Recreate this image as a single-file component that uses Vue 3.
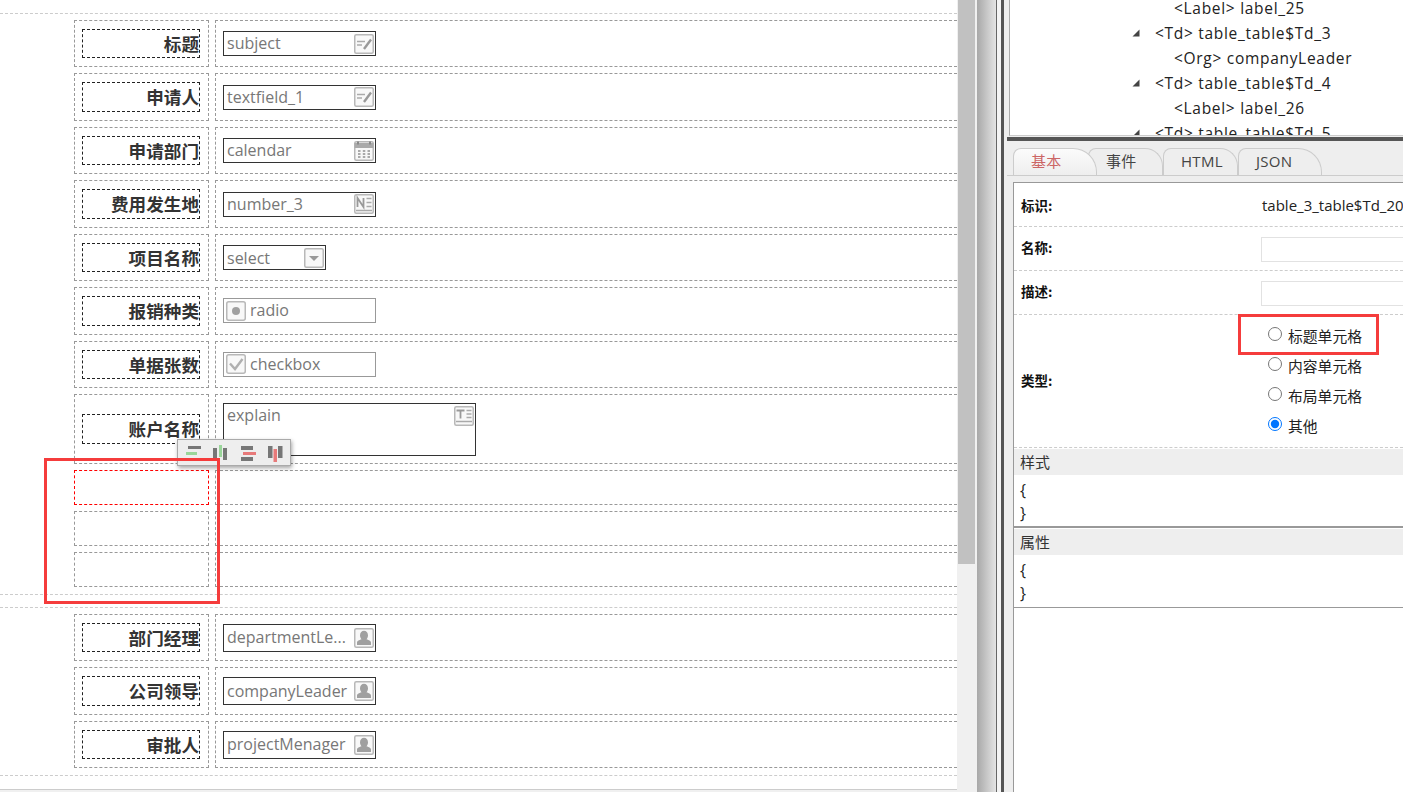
<script setup>
const groupOne = [
  { label: '标题', value: 'subject', icon: 'text', kind: 'input' },
  { label: '申请人', value: 'textfield_1', icon: 'text', kind: 'input' },
  { label: '申请部门', value: 'calendar', icon: 'calendar', kind: 'input' },
  { label: '费用发生地', value: 'number_3', icon: 'number', kind: 'input' },
  { label: '项目名称', value: 'select', icon: 'select', kind: 'select' },
  { label: '报销种类', value: 'radio', icon: 'radio', kind: 'choice' },
  { label: '单据张数', value: 'checkbox', icon: 'check', kind: 'choice' },
  { label: '账户名称', value: 'explain', icon: 'area', kind: 'area' },
]
const groupTwo = [
  { label: '部门经理', value: 'departmentLe...', icon: 'person', kind: 'org' },
  { label: '公司领导', value: 'companyLeader', icon: 'person', kind: 'org' },
  { label: '审批人', value: 'projectMenager', icon: 'person', kind: 'org' },
]
const emptyRows = [{ active: true }, { active: false }, { active: false }]
const tree = [
  { text: '<Label> label_25', open: false },
  { text: '<Td> table_table$Td_3', open: true },
  { text: '<Org> companyLeader', open: false },
  { text: '<Td> table_table$Td_4', open: true },
  { text: '<Label> label_26', open: false },
  { text: '<Td> table_table$Td_5', open: true },
]
const tabs = ['基本', '事件', 'HTML', 'JSON']
const cellTypes = ['标题单元格', '内容单元格', '布局单元格', '其他']
</script>

<template>
  <div class="page">
    <main class="form-pane">
      <section class="group">
        <div v-for="row in groupOne" :key="row.label" class="row" :class="{ tall: row.kind === 'area' }">
          <div class="cell label-cell"><div class="label-box">{{ row.label }}</div></div>
          <div class="cell value-cell">
            <div class="field" :class="row.kind">
              <svg v-if="row.kind === 'choice'" class="ficon lead" viewBox="0 0 20 20">
                <rect x=".75" y=".75" width="18.5" height="18.5" rx="2" fill="#f8f8f8" stroke="#b8b8b8" stroke-width="1.500" />
                <circle v-if="row.icon === 'radio'" cx="10" cy="10" r="4" fill="#a0a0a0" />
                <path v-else d="M4 9.500 9 15 16.500 5" fill="none" stroke="#b0b0b0" stroke-width="2.400" />
              </svg>
              <span class="field-text">{{ row.value }}</span>
              <svg v-if="row.kind !== 'choice'" class="ficon" viewBox="0 0 20 20">
                <rect x=".75" y=".75" width="18.5" height="18.5" rx="1.500" fill="#f8f8f8" stroke="#b8b8b8" stroke-width="1.500" />
                <template v-if="row.icon === 'text'">
                  <path d="M3 7.500h8M3 11h5" stroke="#aaa" stroke-width="1.600" fill="none" />
                  <path d="M17 5.500 10 15" stroke="#999" stroke-width="2.400" fill="none" />
                </template>
                <template v-else-if="row.icon === 'calendar'">
                  <rect x=".5" y="2" width="19" height="5" fill="#aaa" />
                  <path d="M4 .5v3M16 .5v3" stroke="#888" stroke-width="2" />
                  <path d="M4 10h2.500M8.800 10h2.500M13.500 10h2.500M4 13h2.500M8.800 13h2.500M13.500 13h2.500M4 16h2.500M8.800 16h2.500M13.500 16h2.500" stroke="#aaa" stroke-width="2" />
                </template>
                <template v-else-if="row.icon === 'number'">
                  <path d="M3.500 13V4l6 9V4" stroke="#999" stroke-width="1.800" fill="none" />
                  <path d="M12.500 4.500h5M12.500 8.500h5M12.500 12.500h5M2 16.500h16" stroke="#aaa" stroke-width="1.300" fill="none" />
                </template>
                <path v-else-if="row.icon === 'select'" d="M5 8h10l-5 5z" fill="#999" />
                <template v-else-if="row.icon === 'area'">
                  <path d="M2.500 4.500h8M6.500 4.500v8" stroke="#999" stroke-width="1.800" fill="none" />
                  <path d="M12.500 4.500h5M12.500 8h5M12.500 11.500h5M2 15.500h16" stroke="#aaa" stroke-width="1.300" fill="none" />
                </template>
              </svg>
            </div>
          </div>
        </div>
        <div v-for="(row, i) in emptyRows" :key="i" class="row short">
          <div class="cell label-cell" :class="{ active: row.active }"></div>
          <div class="cell value-cell"></div>
        </div>
      </section>
      <section class="group second">
        <div v-for="row in groupTwo" :key="row.label" class="row">
          <div class="cell label-cell"><div class="label-box">{{ row.label }}</div></div>
          <div class="cell value-cell">
            <div class="field org">
              <span class="field-text">{{ row.value }}</span>
              <svg class="ficon" viewBox="0 0 20 20">
                <rect x=".75" y=".75" width="18.5" height="18.5" rx="1.500" fill="#f8f8f8" stroke="#b8b8b8" stroke-width="1.500" />
                <ellipse cx="10" cy="7.500" rx="4" ry="4.800" fill="#a0a0a0" />
                <path d="M3 17v-2.500c0-2 3.500-2.800 5-3.500h4c1.500.7 5 1.500 5 3.500V17z" fill="#a0a0a0" />
              </svg>
            </div>
          </div>
        </div>
      </section>
      <div class="pane-foot"></div>
    </main>

    <div class="scrollbar"><div class="thumb"></div></div>
    <div class="splitter"></div>

    <aside class="side">
      <div class="tree">
        <div v-for="item in tree" :key="item.text" class="tree-item" :class="{ parent: item.open }">
          <svg v-if="item.open" class="arrow" viewBox="0 0 8 8"><path d="M7.500 .5V7.500H.5z" fill="#444" /></svg>
          <span>{{ item.text }}</span>
        </div>
      </div>
      <div class="hbar"></div>
      <nav class="tabs">
        <div v-for="(tab, i) in tabs" :key="tab" class="tab" :class="['tab-' + i, { current: i === 0 }]">{{ tab }}</div>
      </nav>
      <div class="props">
        <div class="prop"><b>标识:</b><div class="prop-value plain">table_3_table$Td_20</div></div>
        <div class="prop lifted"><b>名称:</b><div class="prop-value"><div class="fake-input"></div></div></div>
        <div class="prop lifted"><b>描述:</b><div class="prop-value"><div class="fake-input"></div></div></div>
        <div class="prop type">
          <b>类型:</b>
          <div class="radios">
            <label v-for="(t, i) in cellTypes" :key="t" class="radio-row">
              <input type="radio" name="cell-type" :checked="i === 3" />
              <span>{{ t }}</span>
            </label>
          </div>
        </div>
        <div class="section-title">样式</div>
        <div class="code thick"><div>{</div><div>}</div></div>
        <div class="section-title">属性</div>
        <div class="code"><div>{</div><div>}</div></div>
      </div>
    </aside>

    <div class="align-bar">
      <svg viewBox="0 0 20 20"><path d="M4 3h13v3H4zM4 15h13v3H4z" fill="#777" /><path d="M2 9h11v3H2z" fill="#9ad69a" /></svg>
      <svg viewBox="0 0 20 20"><path d="M2 5h4v12H2zM12 5h4v12H12z" fill="#777" /><path d="M8 2h3v12H8z" fill="#9ad69a" /></svg>
      <svg viewBox="0 0 20 20"><path d="M3 3h12v4H3zM3 14h12v4H3z" fill="#777" /><path d="M5 9h13v3H5z" fill="#e87a7a" /></svg>
      <svg viewBox="0 0 20 20"><path d="M3 3h4.500v12H3zM13 3h4.500v12H13z" fill="#777" /><path d="M8.500 6h3.500v13H8.500z" fill="#e87a7a" /></svg>
    </div>
    <div class="mark mark-left"></div>
    <div class="mark mark-right"></div>
  </div>
</template>

<style>
html, body { margin: 0; background: #fff; overflow: hidden; }
</style>

<style scoped>
.page {
  position: relative;
  display: flex;
  width: 1403px;
  height: 792px;
  overflow: hidden;
  background: #fff;
  font-family: "Open Sans", "Noto Sans CJK SC", sans-serif;
  color: #333;
}
.form-pane {
  position: relative;
  flex: 0 0 957px;
  box-sizing: border-box;
  padding-top: 13px;
  overflow: hidden;
}
.group {
  display: flex;
  flex-direction: column;
  gap: 6px;
  padding: 6px 0 7px 74px;
  border-top: 1px dashed #ccc;
}
.group:first-child { border-bottom: 1px dashed #ccc; }
.group.second {
  margin-top: 12px;
  border-bottom: 1px dashed #ccc;
}
.row { display: flex; gap: 6px; height: 47.450px; }
.row.tall { height: 69.850px; }
.row.short { height: 35px; }
.cell {
  box-sizing: border-box;
  display: flex;
  align-items: center;
  padding-left: 7px;
  border: 1px dashed #999;
}
.label-cell { flex: 0 0 135px; }
.label-cell.active { border-color: #f00; }
.value-cell { flex: 1; border-right: 0; }
.label-box {
  box-sizing: border-box;
  width: 118px;
  height: 29.500px;
  border: 1px dashed #222;
  font: 700 17.600px/28px "Noto Sans CJK SC", sans-serif;
  text-align: right;
  white-space: nowrap;
  overflow: hidden;
  color: #333;
}
.field {
  box-sizing: border-box;
  display: flex;
  align-items: center;
  justify-content: space-between;
  width: 153px;
  height: 25px;
  padding: 0 1px 0 3px;
  border: 1px solid #333;
  font-size: 16px;
  color: #777;
}
.field.select { width: 103px; margin-top: 1px; }
.field.select .field-text { margin-top: 0; }
.field.choice {
  justify-content: flex-start;
  gap: 4px;
  padding-left: 2px;
  border-color: #999;
}
.field.area {
  width: 253px;
  height: 53px;
  margin-top: 1px;
  align-items: flex-start;
  padding-top: 2px;
}
.field.org { height: 28px; }
.field-text { white-space: nowrap; line-height: 20px; margin-top: -1px; }
.ficon { flex: none; width: 20px; height: 20px; }

.scrollbar {
  flex: 0 0 20px;
  background: #f0f0f0;
}
.thumb {
  height: 564px;
  margin: 0 2px 0 1px;
  background: #c1c1c1;
}
.splitter {
  flex: 0 0 27px;
  background: linear-gradient(to right,
    #a8a8a8 0, #e4e4e4 19px,
    #666 19px, #666 20px,
    #f4f4f4 20px, #f4f4f4 24px,
    #555 24px, #555 27px);
}
.side {
  flex: 1;
  min-width: 0;
  display: flex;
  flex-direction: column;
  padding-left: 3px;
  background: #eee;
}
.tree {
  box-sizing: border-box;
  height: 136px;
  margin-left: 2px;
  border-left: 1px solid #aaa;
  border-bottom: 1px solid #ccc;
  background: #fff;
  overflow: hidden;
}
.tree-item {
  position: relative;
  height: 25px;
  padding-left: 164px;
  font-size: 15.500px;
  letter-spacing: .7px;
  line-height: 17px;
  color: #222;
  white-space: nowrap;
}
.tree-item.parent { padding-left: 145px; }
.arrow {
  position: absolute;
  left: 122px;
  top: 4px;
  width: 8px;
  height: 8px;
}
.hbar { height: 4px; margin-top: 1px; background: #555; }
.tabs {
  box-sizing: border-box;
  display: flex;
  align-items: flex-end;
  height: 35px;
  padding-left: 6px;
  border-bottom: 1px solid #ccc;
}
.tab {
  box-sizing: border-box;
  height: 27px;
  padding-left: 17px;
  border: 1px solid #ccc;
  border-bottom: 0;
  border-radius: 8px 18px 0 0;
  font-size: 15px;
  letter-spacing: .3px;
  line-height: 24px;
  color: #444;
}
.tab-0 { width: 84px; position: relative; z-index: 1; border-radius: 8px 24px 0 0; }
.tab-1 { width: 75px; margin-left: -9px; }
.tab-2 { width: 75px; }
.tab-3 { width: 84px; border-radius: 8px 24px 0 0; }
.tab.current {
  color: #c66;
  background: linear-gradient(#fbfbfb, #eee);
}
.props {
  flex: 1;
  margin: 6px 0 0 6px;
  border-top: 1px solid #999;
  border-left: 1px solid #999;
  background: #fff;
}
.prop {
  display: grid;
  grid-template-columns: 247px 1fr;
  align-items: center;
  height: 44px;
  box-sizing: border-box;
  border-bottom: 1px dashed #ccc;
  overflow: hidden;
}
.prop b {
  padding-left: 7px;
  font: 700 13.500px "Noto Sans CJK SC", sans-serif;
  color: #111;
}
.prop.lifted b { margin-top: -3px; }
.prop.lifted .prop-value { padding-top: 2px; }
.prop-value { min-width: 0; white-space: nowrap; overflow: hidden; }
.prop-value.plain {
  font-size: 15px;
  color: #222;
  padding-left: 1px;
}
.fake-input {
  box-sizing: border-box;
  width: 180px;
  height: 25px;
  border: 1px solid #e2e2e2;
}
.prop.type { height: 133px; }
.prop.type b { margin-top: -3px; }
.radios { display: flex; flex-direction: column; padding-left: 7px; margin-top: -2px; }
.radio-row {
  display: flex;
  align-items: center;
  height: 30px;
  font: 14.800px "Noto Sans CJK SC", sans-serif;
  color: #222;
}
.radio-row input {
  width: 14px;
  height: 14px;
  margin: 0 6px 3px 0;
}
.section-title {
  height: 26px;
  margin-top: 1px;
  padding-left: 6px;
  background: #eee;
  font: 15px/25px "Noto Sans CJK SC", sans-serif;
  color: #333;
}
.code {
  box-sizing: border-box;
  height: 53px;
  padding: 4px 0 0 6px;
  border-bottom: 1px solid #999;
  font-size: 16px;
  line-height: 23px;
  color: #222;
}
.code.thick { height: 53px; padding-top: 3.500px; border-bottom-width: 2px; }
.pane-foot {
  position: absolute;
  left: 0;
  right: 0;
  top: 789px;
  height: 3px;
  box-sizing: border-box;
  border-top: 1px solid #ccc;
  background: #f0f0f0;
}
.align-bar {
  position: absolute;
  left: 177px;
  top: 439px;
  box-sizing: border-box;
  display: flex;
  gap: 7px;
  align-items: center;
  width: 114px;
  height: 27px;
  padding-left: 6px;
  border: 1px solid #aaa;
  background: #eee;
  box-shadow: 1px 2px 4px rgba(0, 0, 0, .35);
}
.align-bar svg { width: 20px; height: 20px; }
.mark {
  position: absolute;
  box-sizing: border-box;
  border: 3px solid #f53c3c;
}
.mark-left { left: 44px; top: 458px; width: 176px; height: 146px; }
.mark-right { left: 1238px; top: 314px; width: 141px; height: 41px; }
</style>
